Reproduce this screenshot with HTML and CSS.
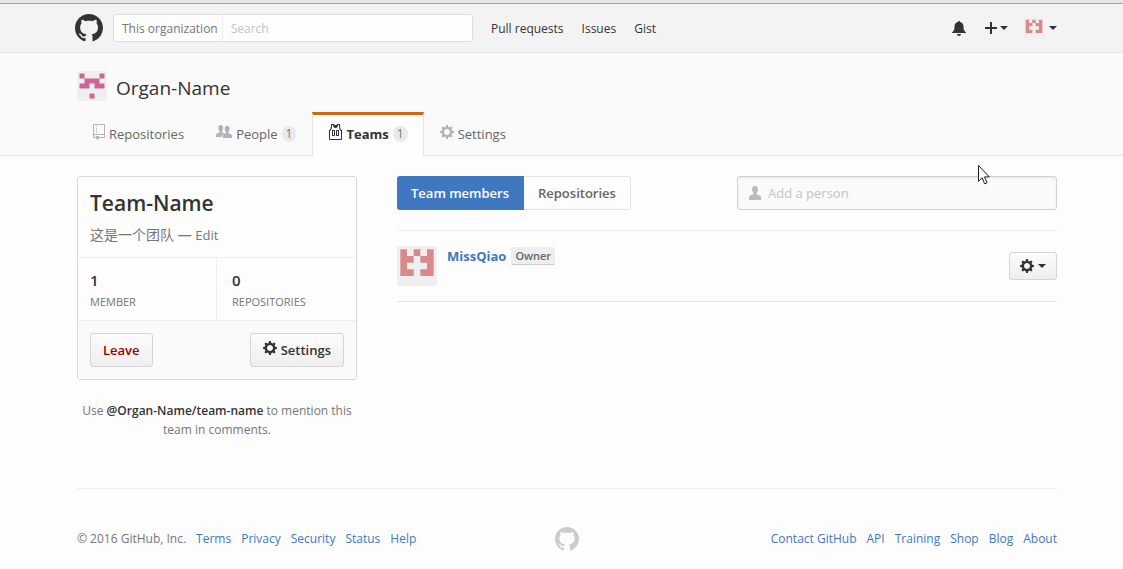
FILE: index.html
```html
<!DOCTYPE html>
<html lang="en">
<head>
<meta charset="utf-8">
<title>Team-Name · Organ-Name</title>
<meta name="viewport" content="width=device-width, initial-scale=1">
<link rel="stylesheet" href="styles.css">
</head>
<body>
<svg class="sprite" width="0" height="0" aria-hidden="true">
  <symbol id="mark" viewBox="0 0 16 16"><path d="M8 0C3.58 0 0 3.58 0 8c0 3.54 2.29 6.53 5.47 7.59.4.07.55-.17.55-.38 0-.19-.01-.82-.01-1.49-2.01.37-2.53-.49-2.69-.94-.09-.23-.48-.94-.82-1.13-.28-.15-.68-.52-.01-.53.63-.01 1.08.58 1.23.82.72 1.21 1.87.87 2.33.66.07-.52.28-.87.51-1.07-1.78-.2-3.64-.89-3.64-3.95 0-.87.31-1.59.82-2.15-.08-.2-.36-1.02.08-2.12 0 0 .67-.21 2.2.82.64-.18 1.32-.27 2-.27s1.36.09 2 .27c1.53-1.04 2.2-.82 2.2-.82.44 1.1.16 1.92.08 2.12.51.56.82 1.27.82 2.15 0 3.07-1.87 3.75-3.65 3.95.29.25.54.73.54 1.48 0 1.07-.01 1.93-.01 2.2 0 .21.15.46.55.38A8.01 8.01 0 0 0 16 8c0-4.42-3.58-8-8-8z"/></symbol>
  <symbol id="gear" viewBox="0 0 14 16"><path d="M14 8.77v-1.6l-1.94-.64-.45-1.09.88-1.84-1.13-1.13-1.81.91-1.09-.45-.69-1.92h-1.6l-.63 1.94-1.11.45-1.84-.88-1.13 1.13.91 1.81-.45 1.09L0 7.23v1.59l1.94.64.45 1.09-.88 1.84 1.13 1.13 1.81-.91 1.09.45.69 1.92h1.59l.63-1.94 1.11-.45 1.84.88 1.13-1.13-.92-1.81.47-1.09L14 8.75v.02zM7 11c-1.66 0-3-1.34-3-3s1.34-3 3-3 3 1.34 3 3-1.34 3-3 3z"/></symbol>
  <symbol id="repo" viewBox="0 0 12 16"><path d="M4 9H3V8h1v1zm0-3H3v1h1V6zm0-2H3v1h1V4zm0-2H3v1h1V2zm8-1v12c0 .55-.45 1-1 1H6v2l-1.500-1.500L3 16v-2H1c-.55 0-1-.45-1-1V1c0-.55.45-1 1-1h10c.55 0 1 .45 1 1zm-1 10H1v2h2v-1h3v1h5v-2zm0-10H1v9h10V1z"/></symbol>
  <symbol id="jersey" viewBox="0 0 14 16"><path d="M4.500 6l-.5.5v5l.5.5h2l.5-.5v-5L6.500 6h-2zM6 11H5V7h1v4zm6.270-7.250C12.050 2.370 11.960 1.120 12 0H9.020c0 .27-.13.48-.39.69-.25.2-.63.3-1.130.3-.5 0-.88-.09-1.130-.3-.23-.2-.36-.42-.37-.69H3c.05 1.130-.03 2.380-.25 3.750C2.550 5.130 1.950 5.880 1 6v9c.02.27.13.48.31.69.18.21.42.3.69.31h11c.27-.02.48-.13.69-.31.21-.18.3-.42.31-.69V6c-.95-.13-1.530-.88-1.750-2.250h.02zM13 15H2V7c.89-.5 1.480-1.250 1.720-2.250S4.030 2.500 4 1h1c-.02.78.16 1.470.52 2.060.36.58 1.020.89 2 .94.98-.02 1.640-.33 2-.94.36-.59.5-1.280.48-2.060h1c.02 1.420.13 2.550.33 3.380.2.81.69 2 1.670 2.630v8V15zM8.500 6l-.5.5v5l.5.5h2l.5-.5v-5l-.5-.5h-2zm1.500 5H9V7h1v4z"/></symbol>
  <symbol id="person" viewBox="0 0 12 14"><path d="M6 0C4.200 0 3.100 1.200 3.100 3c0 1.900.5 3 1.300 4v1.200C3.500 9 0 9.200 0 11.500V14h12v-2.500C12 9.200 8.500 9 7.600 8.200V7c.8-1 1.300-2.100 1.300-4C8.900 1.200 7.800 0 6 0z"/></symbol>
  <symbol id="people" viewBox="0 0 16 13"><path d="M4.700 0C3.200 0 2.300 1 2.300 2.700c0 1.700.5 2.500 1.200 3.500v1C2.800 8 0 8 0 10.200V12h6.200c.2-2 1.500-2.600 2.600-3.200C7.900 8 6.500 7.700 6 7.200v-1c.7-1 1.200-1.800 1.200-3.500C7.200 1 6.200 0 4.700 0z"/><path d="M11.200.8C9.700.8 8.700 1.800 8.700 3.500c0 1.700.5 2.500 1.200 3.500v1C9.300 8.800 7 8.900 7 11.100V13h9v-1.900c0-2.200-2.800-2.300-3.500-3.100V7c.7-1 1.200-1.800 1.200-3.500C13.700 1.800 12.700.8 11.200.8z"/></symbol>
  <symbol id="bell" viewBox="0 0 14 15"><path d="M7 0C6.400 0 6 .4 6 1 3.700 1.400 2.500 3.200 2.500 5.500c0 3-.5 4.500-2.500 6V12h14v-.5c-2-1.500-2.500-3-2.500-6C11.500 3.200 10.300 1.400 8 1c0-.6-.4-1-1-1zM5 13a2 2 0 0 0 4 0z"/></symbol>
  <symbol id="plus" viewBox="0 0 12 12"><path d="M5 0h2v5h5v2H7v5H5V7H0V5h5z"/></symbol>
  <symbol id="id-user" viewBox="0 0 12 12"><path fill="#efefef" d="M0 0h12v12H0z"/><path fill="#d9888b" d="M1 1h2v2h2v2H3v2h2v2H1zM5 1h2v2H5zM9 1h2v8H7V7h2V5H7V3h2z"/></symbol>
  <symbol id="id-org" viewBox="0 0 12 12"><path fill="#efefef" d="M0 0h12v12H0z"/><path fill="#cf6496" d="M1 1h2v2H1zM9 1h2v2H9zM3 3h6v2h2v2H7V5H5v2H1V5h2zM5 9h2v2H5z"/></symbol>
</svg>

<div class="window-edge"></div>

<header class="topbar">
  <div class="container topbar-row">
    <a class="logo" href="#" aria-label="Homepage"><svg width="28" height="28"><use href="#mark"/></svg></a>
    <form class="search">
      <label class="search-scope" for="q">This organization</label>
      <input id="q" type="text" placeholder="Search">
    </form>
    <nav class="topnav">
      <a href="#">Pull requests</a>
      <a href="#">Issues</a>
      <a href="#">Gist</a>
    </nav>
    <div class="user-nav">
      <a href="#" aria-label="Notifications"><svg width="14" height="15"><use href="#bell"/></svg></a>
      <button type="button" class="menu" aria-label="Create new"><svg width="12" height="12"><use href="#plus"/></svg><span class="caret"></span></button>
      <button type="button" class="menu menu-user" aria-label="Profile"><svg width="20" height="20"><use href="#id-user"/></svg><span class="caret"></span></button>
    </div>
  </div>
</header>

<div class="orghead">
  <div class="container">
    <div class="org-title">
      <svg class="avatar" width="30" height="30"><use href="#id-org"/></svg>
      <h1>Organ-Name</h1>
    </div>
    <nav class="tabs">
      <a class="tab" href="#"><svg width="12" height="16"><use href="#repo"/></svg>Repositories</a>
      <a class="tab" href="#"><svg width="16" height="13"><use href="#people"/></svg>People<span class="counter">1</span></a>
      <a class="tab selected" href="#" aria-current="page"><svg width="14" height="16"><use href="#jersey"/></svg>Teams<span class="counter">1</span></a>
      <a class="tab" href="#"><svg width="14" height="16"><use href="#gear"/></svg>Settings</a>
    </nav>
  </div>
</div>

<main class="page">
  <div class="container columns">
    <aside class="side">
      <section class="card">
        <div class="card-head">
          <h2>Team-Name</h2>
          <p>这是一个团队 — <a href="#">Edit</a></p>
        </div>
        <div class="stats">
          <a class="stat" href="#"><strong>1</strong><span>MEMBER</span></a>
          <a class="stat" href="#"><strong>0</strong><span>REPOSITORIES</span></a>
        </div>
        <div class="card-foot">
          <button type="button" class="btn danger">Leave</button>
          <button type="button" class="btn"><svg width="14" height="16"><use href="#gear"/></svg>Settings</button>
        </div>
      </section>
      <p class="hint">Use <strong>@Organ-Name/team-name</strong> to mention this team in comments.</p>
    </aside>

    <section class="content">
      <div class="toolbar">
        <nav class="subnav">
          <a class="on" href="#">Team members</a>
          <a href="#">Repositories</a>
        </nav>
        <div class="person-field">
          <label for="person-name" aria-label="Add a person"><svg width="12" height="14"><use href="#person"/></svg></label>
          <input id="person-name" type="text" placeholder="Add a person">
          <svg class="pointer" width="12" height="20" viewBox="0 0 12 20"><path fill="#fff" stroke="#1c1c2c" d="M.5.500v15.800l3.600-3.500 2.600 6 2.400-1-2.600-5.900h4.800z"/></svg>
        </div>
      </div>
      <ul class="members">
        <li>
          <svg class="avatar" width="40" height="40"><use href="#id-user"/></svg>
          <div class="member-info"><a href="#">MissQiao</a><span class="role">Owner</span></div>
          <button type="button" class="btn btn-sm" aria-label="Member options"><svg width="14" height="16"><use href="#gear"/></svg><span class="caret"></span></button>
        </li>
      </ul>
    </section>
  </div>
</main>

<footer class="page">
  <div class="container footer-row">
    <div class="links"><span>© 2016 GitHub, Inc.</span><a href="#">Terms</a><a href="#">Privacy</a><a href="#">Security</a><a href="#">Status</a><a href="#">Help</a></div>
    <a class="footer-mark" href="#" aria-label="Homepage"><svg width="24" height="24"><use href="#mark"/></svg></a>
    <div class="links links-end"><a href="#">Contact GitHub</a><a href="#">API</a><a href="#">Training</a><a href="#">Shop</a><a href="#">Blog</a><a href="#">About</a></div>
  </div>
</footer>
</body>
</html>
```
FILE: styles.css
```css
* { box-sizing: border-box; }

body {
  margin: 0;
  background: #fdfdfd;
  color: #333;
  font: 13px/20px "Open Sans", "Noto Sans CJK SC", sans-serif;
}

h1, h2, p, ul { margin: 0; padding: 0; }
ul { list-style: none; }
a { color: #4078c0; text-decoration: none; }
button, input { font: inherit; color: inherit; margin: 0; }
svg { display: block; flex: none; fill: currentColor; }
.sprite { position: absolute; }

.window-edge {
  height: 4px;
  background: #e9e6e8;
  border-bottom: 1px solid #a3a0a2;
}

.topbar, .orghead, .page { padding-left: 11px; }
.container { max-width: 980px; margin: 0 auto; }

.topbar {
  background: #f3f3f3;
  border-bottom: 1px solid #e5e5e5;
}
.topbar-row {
  display: flex;
  align-items: center;
  height: 48px;
}
.logo { color: #333; margin: 0 10px 0 -2px; }
.search {
  display: flex;
  width: 360px;
  height: 28px;
  background: #fdfdfd;
  border: 1px solid #ddd;
  border-radius: 3px;
}
.search-scope {
  padding: 0 4px 0 8px;
  font-size: 12px;
  line-height: 28px;
  color: #767676;
  border-right: 1px solid #eee;
  white-space: nowrap;
}
.search input {
  flex: 1;
  min-width: 0;
  padding: 2px 8px 0;
  border: 0;
  background: none;
  font-size: 12px;
}
::placeholder { color: #c4c4c4; opacity: 1; }
.topnav {
  display: flex;
  gap: 18px;
  margin-left: 18px;
  padding-top: 2px;
  font-size: 12px;
  font-weight: 500;
}
.topnav a { color: #333; }
.user-nav {
  display: flex;
  align-items: center;
  margin-left: auto;
}
.user-nav a { color: #333; margin-right: 19px; }
.menu {
  display: flex;
  align-items: center;
  gap: 3px;
  padding: 0;
  border: 0;
  background: none;
}
.menu-user { gap: 5px; margin-left: 16px; }
.caret {
  border: 4px solid transparent;
  border-top-color: currentColor;
  border-bottom: 0;
}

.orghead {
  background: #fafafa;
  border-bottom: 1px solid #e5e5e5;
}
.org-title {
  display: flex;
  align-items: flex-start;
  gap: 9px;
  padding-top: 18px;
}
.org-title h1 {
  padding-top: 2px;
  font-size: 19px;
  line-height: 30px;
  font-weight: 400;
}
.avatar { border-radius: 3px; }
.tabs {
  display: flex;
  margin: 9px 0 -1px;
}
.tab {
  display: flex;
  align-items: center;
  gap: 4px;
  height: 44px;
  padding: 0 15px 4px;
  border: 1px solid transparent;
  border-top-width: 3px;
  border-bottom: 0;
  color: #666;
}
.tab svg { color: #b4b4b4; margin-bottom: 4px; }
.tab.selected {
  background: #fdfdfd;
  border-color: #d26911 #e5e5e5 transparent;
  color: #333;
  font-weight: 700;
}
.tab.selected svg { color: #333; }
.counter {
  padding: 0 4px;
  border-radius: 8px;
  background: #eaeaea;
  color: #767676;
  font-size: 12px;
  line-height: 16px;
  font-weight: 400;
}

.columns {
  display: flex;
  gap: 40px;
  margin-top: 20px;
}
.side { flex: 0 0 280px; }
.content { flex: 1; min-width: 0; }

.card {
  border: 1px solid #d8d8d8;
  border-radius: 3px;
}
.card-head { padding: 12px 12px 11px; }
.card-head h2 {
  font-size: 21px;
  line-height: 28px;
  font-weight: 600;
}
.card-head p {
  margin-top: 7px;
  font-size: 14px;
  line-height: 21px;
  color: #767676;
}
.card-head p a { color: #767676; font-size: 13px; }
.stats {
  display: grid;
  grid-template-columns: 1fr 1fr;
  border-top: 1px solid #eee;
  border-bottom: 1px solid #eee;
}
.stat {
  padding: 10px 12px 8px;
  color: #767676;
}
.stat:first-child { border-right: 1px solid #eee; }
.stat + .stat { padding-left: 15px; }
.stat strong {
  display: block;
  color: #333;
  font-size: 15px;
  line-height: 24px;
  font-weight: 600;
}
.stat span { display: block; font-size: 11px; line-height: 20px; }
.card-foot {
  display: flex;
  justify-content: space-between;
  padding: 12px;
  background: #fafafa;
}

.btn {
  display: flex;
  align-items: center;
  gap: 4px;
  height: 34px;
  padding: 0 12px;
  border: 1px solid #d5d5d5;
  border-radius: 3px;
  background: linear-gradient(#fcfcfc, #eee);
  color: #333;
  font-weight: 600;
}
.card-foot .btn svg { margin-bottom: 4px; }
.btn.danger { color: #900; }
.btn-sm { height: 28px; padding: 0 10px; }

.hint {
  margin-top: 21px;
  font-size: 12px;
  line-height: 19px;
  text-align: center;
  color: #767676;
}
.hint strong { color: #333; font-weight: 600; }

.toolbar {
  display: flex;
  justify-content: space-between;
  padding-bottom: 20px;
  border-bottom: 1px solid #eee;
}
.subnav { display: flex; }
.subnav a {
  padding: 0 14px;
  border: 1px solid #e5e5e5;
  border-left: 0;
  border-radius: 0 3px 3px 0;
  line-height: 32px;
  font-weight: 600;
  color: #666;
}
.subnav .on {
  border-color: #4078c0;
  border-radius: 3px 0 0 3px;
  background: #4078c0;
  color: #fff;
}
.person-field {
  position: relative;
  display: flex;
  align-items: center;
  gap: 7px;
  width: 320px;
  height: 34px;
  padding: 0 11px;
  border: 1px solid #d0d0d0;
  border-radius: 3px;
  background: #fafafa;
  box-shadow: inset 0 1px 2px rgba(0, 0, 0, .08);
}
.person-field label { color: #bbb; }
.person-field input {
  flex: 1;
  min-width: 0;
  padding: 0;
  border: 0;
  background: none;
}
.pointer { position: absolute; left: 240px; top: -12px; }

.members li {
  display: flex;
  align-items: center;
  padding: 15px 0;
  border-bottom: 1px solid #e5e5e5;
}
.member-info {
  display: flex;
  align-items: center;
  align-self: flex-start;
  gap: 5px;
  margin-left: 10px;
}
.member-info a { font-weight: 700; }
.role {
  padding: 0 4px;
  border-bottom: 1px solid #ccc;
  border-radius: 2px;
  background: #eee;
  color: #666;
  font-size: 11px;
  line-height: 17px;
  font-weight: 600;
}
.members .btn { margin-left: auto; }

.footer-row {
  display: grid;
  grid-template-columns: 1fr auto 1fr;
  align-items: center;
  margin-top: 49px;
  padding: 38px 0 17px;
  border-top: 1px solid #eee;
  font-size: 12px;
  color: #767676;
}
.links { display: flex; gap: 10px; }
.links-end { justify-content: flex-end; }
.footer-mark { color: #ccc; }
```
